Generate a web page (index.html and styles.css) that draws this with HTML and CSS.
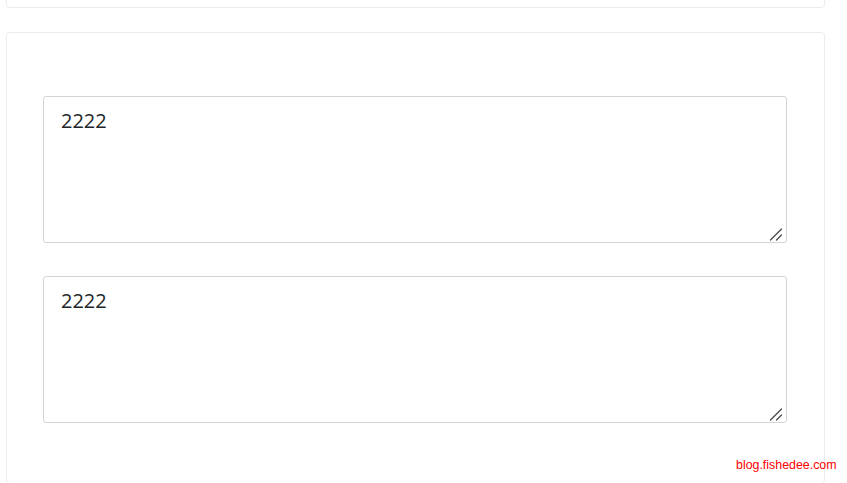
FILE: index.html
```html
<!DOCTYPE html>
<html>
<head>
<meta charset="utf-8">
<link rel="stylesheet" href="styles.css">
</head>
<body>
<div class="page">
  <div class="card card-top"></div>
  <div class="card card-main">
    <div class="field">
      <textarea class="input" rows="4">2222</textarea>
      <svg class="grip" width="14" height="14" viewBox="0 0 14 14"><path d="M1.5 13 L12.5 2 M7.5 13 L12.5 8" stroke="#4a4a4a" stroke-width="1.3" stroke-linecap="round" fill="none"/></svg>
    </div>
    <div class="field">
      <textarea class="input" rows="4">2222</textarea>
      <svg class="grip" width="14" height="14" viewBox="0 0 14 14"><path d="M1.5 13 L12.5 2 M7.5 13 L12.5 8" stroke="#4a4a4a" stroke-width="1.3" stroke-linecap="round" fill="none"/></svg>
    </div>
  </div>
</div>
<div class="watermark">blog.fishedee.com</div>
</body>
</html>
```

FILE: styles.css
```css
html, body {
  margin: 0;
  padding: 0;
  background: #fff;
  overflow: hidden;
}
body {
  font-family: "Open Sans", "Noto Sans", sans-serif;
  color: #212529;
}
.page {
  width: 819px;
  padding-left: 6px;
  display: flex;
  flex-direction: column;
  gap: 24px;
}
.card {
  border: 1px solid #ececec;
  border-radius: 4px;
  background: #fff;
  box-sizing: border-box;
}
.card-top {
  height: 28px;
  margin-top: -20px;
}
.card-main {
  padding: 63px 37px 60px 36px;
  display: flex;
  flex-direction: column;
  gap: 33px;
}
.field {
  display: flex;
  position: relative;
}
.input {
  width: 100%;
  height: 147px;
  box-sizing: border-box;
  border: 1px solid #d4d4d4;
  border-radius: 3px;
  padding: 9px 17px 7px;
  font-family: "Open Sans", "Noto Sans", sans-serif;
  font-size: 20px;
  line-height: 1.5;
  color: #212529;
  background: #fff;
  resize: none;
  outline: none;
  margin: 0;
}
.grip {
  position: absolute;
  right: 4px;
  bottom: 2px;
}
.watermark {
  position: absolute;
  left: 736px;
  top: 458px;
  font-family: "Liberation Sans", Arial, sans-serif;
  font-size: 12.4px;
  color: #ff0000;
}
```
